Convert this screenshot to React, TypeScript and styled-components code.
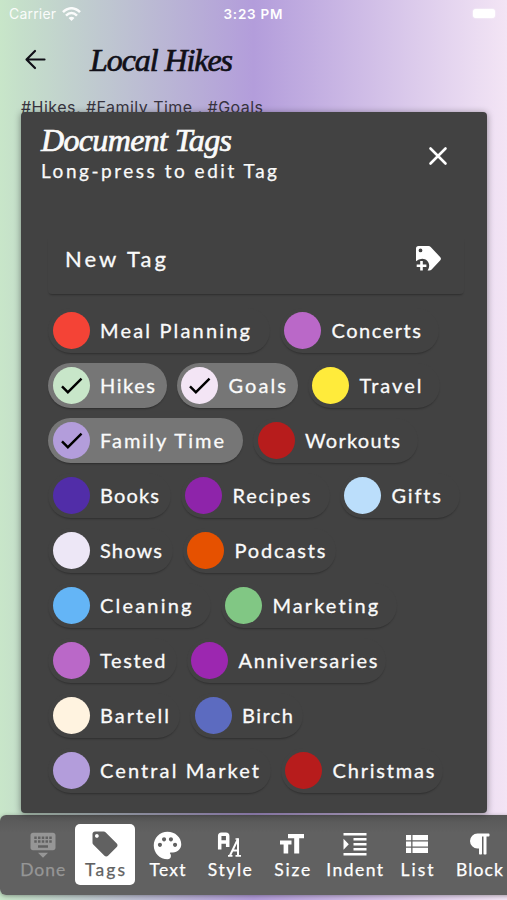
import React, { useLayoutEffect, useRef, useState } from "react";
import styled, { createGlobalStyle, css } from "styled-components";
import { MdCheck, MdKeyboardHide, MdLocalOffer, MdPalette } from "react-icons/md";
import { FaParagraph } from "react-icons/fa";

const GlobalStyle = createGlobalStyle`
  * { box-sizing: border-box; }
  body { margin: 0; overflow: hidden; }
`;

const Screen = styled.div`
  width: 507px;
  height: 900px;
  overflow: hidden;
  display: flex;
  flex-direction: column;
  background: linear-gradient(90deg, #c8e6c9 0%, #c5dfca 4%, #b39ddb 50%, #f3e5f5 100%);
  font-family: Lato, "Liberation Sans", sans-serif;
`;

/* Text set to a given measure by adjusting its tracking. */
const Tracked = styled.span<{ $w: number }>`
  display: block;
  flex: none;
  width: ${(p) => p.$w}px;
  white-space: pre;
`;

function Fitted({ width, children }: { width: number; children: string }) {
  const ref = useRef<HTMLSpanElement>(null);
  const [spacing, setSpacing] = useState(0);
  useLayoutEffect(() => {
    if (!ref.current) return;
    const natural = ref.current.getBoundingClientRect().width;
    setSpacing((width - natural) / (children.length - 1));
  }, [width, children]);
  return (
    <Tracked $w={width}>
      <span ref={ref} style={{ letterSpacing: spacing }}>{children}</span>
    </Tracked>
  );
}

const StatusBar = styled.header`
  flex: none;
  height: 28px;
  padding: 0 12px 0 9px;
  display: grid;
  grid-template-columns: 1fr 57px 1fr;
  align-items: center;
  color: #fff;
  font: 400 14px/28px Inter, sans-serif;
`;
const Carrier = styled.div`
  display: flex;
  align-items: center;
  gap: 6px;
  opacity: 0.92;
`;
const Clock = styled.div`
  font-weight: 600;
  font-size: 13.5px;
`;
const Battery = styled.div`
  justify-self: end;
  width: 22px;
  height: 9px;
  margin-top: -2px;
  border-radius: 3px;
  background: #fff;
  box-shadow: 0 0 2px #fff;
`;

const TitleBar = styled.div`
  flex: none;
  height: 64px;
  padding-left: 22px;
  display: flex;
  align-items: center;
  gap: 42px;
  color: #111018;
`;
const scriptFont = css`
  margin: 0;
  font: italic 400 32px/34px "Liberation Serif", serif;
  -webkit-text-stroke: 0.7px currentColor;
`;
const Title = styled.h1`
  ${scriptFont}
`;
const HashLine = styled.div`
  flex: none;
  height: 20px;
  padding: 5px 0 0 21px;
  color: #38343f;
  font: 400 16px/20px Inter, sans-serif;
`;

const Panel = styled.section`
  position: relative;
  flex: none;
  width: 466px;
  height: 701px;
  margin: 0 0 2px 21px;
  border-radius: 4px;
  background: #424242;
  color: #fafafa;
  box-shadow: 0 1px 7px rgba(0, 0, 0, 0.42);
  display: flex;
  flex-direction: column;
`;
const PanelHead = styled.div`
  height: 124px;
  padding: 11px 35px 0 20px;
  display: flex;
  justify-content: space-between;
`;
const PanelTitle = styled.h2`
  ${scriptFont}
`;
const Subtitle = styled.p`
  margin: 2px 0 0;
  font-size: 19px;
  line-height: 24px;
  -webkit-text-stroke: 0.25px currentColor;
`;
const Close = styled.button`
  margin: 19px 0 0;
  padding: 0;
  width: 28px;
  height: 28px;
  border: 0;
  background: none;
  color: #fff;
`;
const NewTag = styled.div`
  width: 416px;
  height: 58px;
  margin-left: 27px;
  padding: 0 22px 13px 17px;
  display: flex;
  align-items: center;
  justify-content: space-between;
  border-radius: 4px;
  box-shadow: 0 2px 2px -1px rgba(0, 0, 0, 0.32);
  font-size: 22px;
  line-height: 28px;
  -webkit-text-stroke: 0.3px currentColor;
`;
const Chips = styled.div`
  width: 420px;
  margin: 13.5px 0 0 27px;
  display: flex;
  flex-wrap: wrap;
  gap: 10px;
`;
const Chip = styled.div<{ $w: number; $on?: boolean }>`
  width: ${(p) => p.$w}px;
  height: 45px;
  padding-left: 4.5px;
  border-radius: 23px;
  display: flex;
  align-items: center;
  gap: 10.5px;
  background: ${(p) => (p.$on ? "#767676" : "#424242")};
  box-shadow: 0 2px 2px -1px rgba(0, 0, 0, ${(p) => (p.$on ? 0.35 : 0.3)});
  font-size: 20px;
  line-height: 24px;
  -webkit-text-stroke: 0.3px currentColor;
`;
const Dot = styled.div<{ $c: string }>`
  flex: none;
  width: 37px;
  height: 37px;
  border-radius: 50%;
  background: ${(p) => p.$c};
  color: #000;
  display: grid;
  place-items: center;
`;

const Toolbar = styled.nav`
  flex: none;
  width: 520px;
  height: 80px;
  padding: 9px 0 10px 11.5px;
  display: flex;
  border-radius: 6px 0 0 6px;
  background: linear-gradient(#575757, #616161 22%);
  box-shadow: 0 1px 4px rgba(0, 0, 0, 0.35);
`;
const Tool = styled.button<{ $state?: "active" | "off" }>`
  flex: none;
  width: 59.4px;
  height: 61px;
  margin: 0 1.5px;
  padding: 5px 0 0;
  border: 0;
  border-radius: 5px;
  display: flex;
  flex-direction: column;
  align-items: center;
  font: 400 17.5px/22px Lato, sans-serif;
  -webkit-text-stroke: 0.25px currentColor;
  background: ${(p) => (p.$state === "active" ? "#fff" : "transparent")};
  color: ${(p) => (p.$state === "active" ? "#616161" : p.$state === "off" ? "#969696" : "#fff")};
`;
const IconBox = styled.span`
  height: 30px;
  display: grid;
  place-items: center;
`;

const WifiIcon = () => (
  <svg width="19" height="15" viewBox="0 0 19 15" fill="none" stroke="#fff" strokeWidth="2.5">
    <path d="M1 5.2C6-.1 13-.1 18 5.2" />
    <path d="M4 8.6c3.4-3.4 7.6-3.4 11 0" />
    <path d="M6.5 11.1c1.9-1.8 4.1-1.8 6 0L9.5 14z" fill="#fff" stroke="none" />
  </svg>
);
const BackIcon = () => (
  <svg width="26" height="26" viewBox="0 0 26 26" fill="none" stroke="currentColor" strokeWidth="2.2" strokeLinecap="round" strokeLinejoin="round">
    <path d="M22.500 12.500H5M13 4 4.500 12.500l8.500 8.500" />
  </svg>
);
const CloseIcon = () => (
  <svg width="28" height="28" viewBox="0 0 28 28" fill="none" stroke="currentColor" strokeWidth="2.6" strokeLinecap="round">
    <path d="m6.500 6.500 15 15m0-15-15 15" />
  </svg>
);
const TagPlusIcon = () => (
  <svg width="27" height="27" viewBox="0 0 27 27">
    <path fill="#fff" fillRule="evenodd" d="M3.500 1H13.500C14.500 1 15.100 1.400 15.700 2L25.300 12.200Q26.600 13.700 25.300 15.200L16.400 24.700Q15.600 25.500 14.500 25.500H12.600Q14.200 23.300 14.200 20.800C14.200 16.500 11 13.700 7.200 13.700Q3.500 13.700 1 16.300V3.500Q1 1 3.500 1M5.500 3.500a1.900 1.900 0 1 0 0 3.800 1.900 1.900 0 0 0 0-3.800" />
    <path d="M6.500 16v9.500M1.700 20.700h9.700" fill="none" stroke="#fff" strokeWidth="2.600" />
  </svg>
);
const StyleIcon = () => (
  <svg width="25" height="26" viewBox="0 0 25 26" fill="none" stroke="currentColor">
    <path d="M2.700 18.500V5Q2.700 3.200 4.500 3.200h4.400q1.800 0 1.800 1.800V16M2.700 11h7.200" strokeWidth="3.500" />
    <path d="m13 24.500 8-16.500v16.500M15.500 19.500h5.500" strokeWidth="2" />
    <path d="M11 24.800h4.500m3 0h5.500M18.500 8h3.500" strokeWidth="1.700" />
  </svg>
);
const SizeIcon = () => (
  <svg width="24" height="20" viewBox="0 0 24 20" fill="currentColor">
    <path d="M8 0h16v4.200h-4.800V19.500h-5V4.200H8zM0 6.500h11.500v4H8.200v9H3.600v-9H0z" />
  </svg>
);
const IndentIcon = () => (
  <svg width="24" height="23" viewBox="0 0 24 23" fill="currentColor">
    <path d="M.5 0h23v2.500H.5zM10.500 5h13v2.500h-13zM10.500 10h13v2.500h-13zM10.500 15h13v2.500h-13zM.5 20h23v2.500H.5zM.5 5.800l5.300 5.500-5.300 5.500z" />
  </svg>
);
const ListIcon = () => (
  <svg width="22" height="18" viewBox="0 0 22 18" fill="currentColor">
    <path d="M0 0h5.200v5.200H0zM6.500 0H22v5.200H6.500zM0 6.400h5.200v5.200H0zM6.500 6.400H22v5.200H6.500zM0 12.800h5.200V18H0zM6.500 12.800H22V18H6.500z" />
  </svg>
);

type Tag = { name: string; color: string; w: number; text: number; on?: boolean };
const tags: Tag[] = [
  { name: "Meal Planning", color: "#f44336", w: 221.5, text: 150 },
  { name: "Concerts", color: "#ba68c8", w: 159, text: 89.5 },
  { name: "Hikes", color: "#c8e6c9", w: 118.5, text: 55, on: true },
  { name: "Goals", color: "#f3e5f5", w: 121, text: 57.5, on: true },
  { name: "Travel", color: "#ffeb3b", w: 132, text: 62 },
  { name: "Family Time", color: "#b39ddb", w: 195, text: 124, on: true },
  { name: "Workouts", color: "#b71c1c", w: 165, text: 95 },
  { name: "Books", color: "#512da8", w: 122.5, text: 59 },
  { name: "Recipes", color: "#8e24aa", w: 149, text: 78 },
  { name: "Gifts", color: "#bbdefb", w: 120, text: 49 },
  { name: "Shows", color: "#ede7f6", w: 124.5, text: 62 },
  { name: "Podcasts", color: "#e65100", w: 153, text: 91 },
  { name: "Cleaning", color: "#64b5f6", w: 162.5, text: 91.5 },
  { name: "Marketing", color: "#81c784", w: 176, text: 106 },
  { name: "Tested", color: "#ba68c8", w: 128.5, text: 65.5 },
  { name: "Anniversaries", color: "#9c27b0", w: 199, text: 139 },
  { name: "Bartell", color: "#fff3e0", w: 132, text: 69 },
  { name: "Birch", color: "#5c6bc0", w: 113, text: 51 },
  { name: "Central Market", color: "#b39ddb", w: 222.5, text: 159 },
  { name: "Christmas", color: "#b71c1c", w: 162, text: 102 },
];

type ToolItem = { name: string; w: number; icon: React.ReactNode; state?: "active" | "off" };
const tools: ToolItem[] = [
  { name: "Done", w: 45, icon: <MdKeyboardHide size={30} />, state: "off" },
  { name: "Tags", w: 40, icon: <MdLocalOffer size={30} />, state: "active" },
  { name: "Text", w: 36, icon: <MdPalette size={33} /> },
  { name: "Style", w: 44, icon: <StyleIcon /> },
  { name: "Size", w: 36, icon: <SizeIcon /> },
  { name: "Indent", w: 57, icon: <IndentIcon /> },
  { name: "List", w: 33, icon: <ListIcon /> },
  { name: "Block", w: 47, icon: <FaParagraph size={24} /> },
];

export default function App() {
  return (
    <Screen>
      <GlobalStyle />
      <StatusBar>
        <Carrier>
          <Fitted width={47}>Carrier</Fitted>
          <WifiIcon />
        </Carrier>
        <Clock>
          <Fitted width={59}>3:23 PM</Fitted>
        </Clock>
        <Battery />
      </StatusBar>
      <TitleBar>
        <BackIcon />
        <Title>
          <Fitted width={143}>Local Hikes</Fitted>
        </Title>
      </TitleBar>
      <HashLine>
        <Fitted width={242}>#Hikes, #Family Time , #Goals</Fitted>
      </HashLine>
      <Panel>
        <PanelHead>
          <div>
            <PanelTitle>
              <Fitted width={191}>Document Tags</Fitted>
            </PanelTitle>
            <Subtitle>
              <Fitted width={236}>Long-press to edit Tag</Fitted>
            </Subtitle>
          </div>
          <Close aria-label="Close">
            <CloseIcon />
          </Close>
        </PanelHead>
        <NewTag>
          <Fitted width={101}>New Tag</Fitted>
          <TagPlusIcon />
        </NewTag>
        <Chips>
          {tags.map((t) => (
            <Chip key={t.name} $w={t.w} $on={t.on}>
              <Dot $c={t.color}>{t.on && <MdCheck size={29} />}</Dot>
              <Fitted width={t.text}>{t.name}</Fitted>
            </Chip>
          ))}
        </Chips>
      </Panel>
      <Toolbar>
        {tools.map((t) => (
          <Tool key={t.name} $state={t.state}>
            <IconBox>{t.icon}</IconBox>
            <Fitted width={t.w}>{t.name}</Fitted>
          </Tool>
        ))}
      </Toolbar>
    </Screen>
  );
}
